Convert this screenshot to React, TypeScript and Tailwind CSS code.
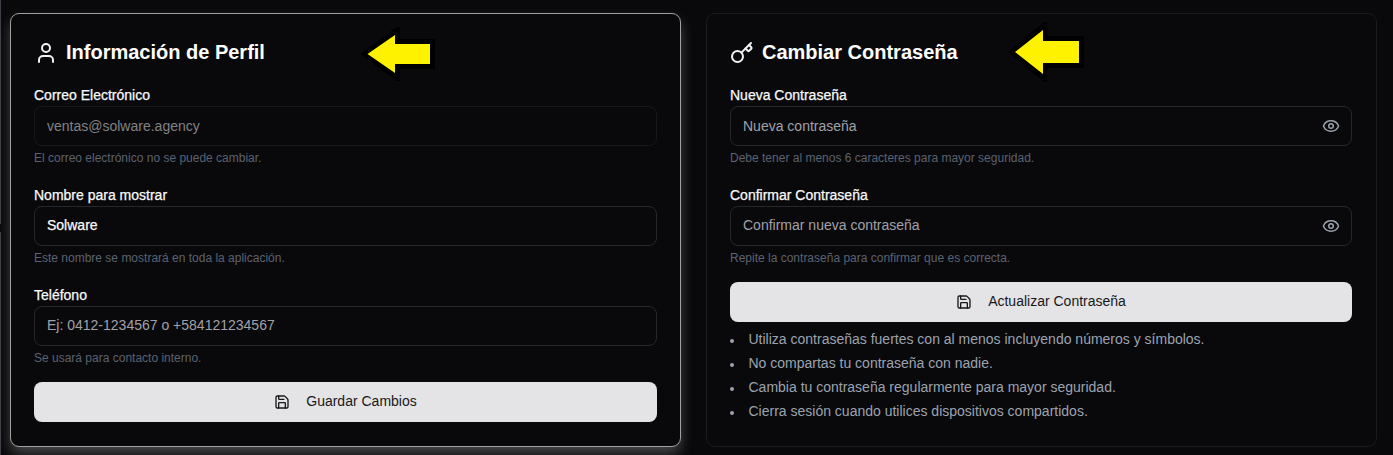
import type { ReactNode } from "react";
import { Eye, Key, Save, User } from "lucide-react";

function Field({ label, value, hint, tone, disabled, eye }: { label: string; value: string; hint: string; tone: string; disabled?: boolean; eye?: boolean }) {
  return (
    <div className="flex h-[100px] flex-col">
      <label className="h-[20px] text-[14px] leading-[20px] text-[#fafafa] [-webkit-text-stroke:0.25px_#fafafa]">{label}</label>
      <div className={`mt-px flex h-[40px] items-center justify-between rounded-[8px] border pr-[11px] pl-[12px] ${disabled ? "border-[#18181a]" : "border-[#27272a]"}`}>
        <span className={`text-[14px] leading-[20px] ${tone}`}>{value}</span>
        {eye && <Eye className="size-[18px] text-[#9ca3af]" strokeWidth={2} />}
      </div>
      <p className="mt-[4px] text-[12px] leading-[16px] text-[#5b6271]">{hint}</p>
    </div>
  );
}

function SaveButton({ children }: { children: ReactNode }) {
  return (
    <button className="flex h-[40px] w-full shrink-0 items-center justify-center gap-4 rounded-[8px] bg-[#e4e4e7] text-[14px] leading-[20px] text-[#18181b]">
      <Save className="size-4" strokeWidth={2} />
      <span className="pb-[2px]">{children}</span>
    </button>
  );
}

const tips = [
  "Utiliza contraseñas fuertes con al menos incluyendo números y símbolos.",
  "No compartas tu contraseña con nadie.",
  "Cambia tu contraseña regularmente para mayor seguridad.",
  "Cierra sesión cuando utilices dispositivos compartidos.",
];

export default function App() {
  return (
    <div className="relative flex h-[455px] w-[1393px] overflow-hidden bg-[#09090b] font-['Liberation_Sans',Arial,sans-serif]">
      <div className="flex w-px shrink-0 flex-col justify-between bg-[#09090b]">
        <div className="h-[224px] bg-[#3f4047]" />
        <div className="h-[223px] bg-[#3f4047]" />
      </div>
      <div className="flex gap-[25px] pt-[13px] pl-[9px]">
        <section className="h-[434px] w-[671px] rounded-[9px] border border-[#a0a0a0] bg-[#09090b] px-[23px] pt-[21px] shadow-[0_7px_14px_-1px_rgba(255,255,255,0.27)]">
          <h2 className="flex h-[34px] items-center gap-[8px] text-[20px] leading-[28px] font-bold text-white">
            <User className="mt-px size-[24px] text-[#f0f0f0]" strokeWidth={2} />
            Información de Perfil
          </h2>
          <div className="mt-[16px]">
            <Field label="Correo Electrónico" value="ventas@solware.agency" hint="El correo electrónico no se puede cambiar." tone="text-[#828284]" disabled />
            <Field label="Nombre para mostrar" value="Solware" hint="Este nombre se mostrará en toda la aplicación." tone="pb-[2px] text-[#fafafa] [-webkit-text-stroke:0.25px_#fafafa]" />
            <Field label="Teléfono" value="Ej: 0412-1234567 o +584121234567" hint="Se usará para contacto interno." tone="pb-[2px] text-[#a1a1aa]" />
          </div>
          <div className="-mt-[3px]"><SaveButton>Guardar Cambios</SaveButton></div>
        </section>
        <section className="h-[434px] w-[671px] rounded-[9px] border border-[#1b1b1d] bg-[#09090b] pr-[24px] pl-[23px] pt-[21px]">
          <h2 className="flex h-[34px] items-center gap-[8px] text-[20px] leading-[28px] font-bold text-white">
            <Key className="mt-px size-[24px] text-[#f0f0f0]" strokeWidth={2} />
            Cambiar Contraseña
          </h2>
          <div className="mt-[16px]">
            <Field label="Nueva Contraseña" value="Nueva contraseña" hint="Debe tener al menos 6 caracteres para mayor seguridad." tone="text-[#a1a1aa]" eye />
            <Field label="Confirmar Contraseña" value="Confirmar nueva contraseña" hint="Repite la contraseña para confirmar que es correcta." tone="pb-[2px] text-[#a1a1aa]" eye />
          </div>
          <div className="-mt-[3px]"><SaveButton>Actualizar Contraseña</SaveButton></div>
          <ul className="mt-[5px] text-[14px] leading-[24px] text-[#9ca3af]">
            {tips.map((t) => (
              <li key={t} className="flex items-center gap-[14.5px]">
                <span className="mt-[3px] size-[4px] rounded-full bg-[#9ca3af]" />
                {t}
              </li>
            ))}
          </ul>
        </section>
      </div>
      <svg className="absolute top-[26px] left-[360px]" width="76" height="56" viewBox="360 26 76 56">
        <path d="M360 54L397 27H400V39H435V69H400V81H397Z" fill="#000" />
        <path d="M367.5 54L395 35V44H430V64H395V73Z" fill="#fff200" />
      </svg>
      <svg className="absolute top-[21px] left-[1008px]" width="77" height="62" viewBox="1008 21 77 62">
        <path d="M1008 52L1044 22H1047V36H1084V68H1047V82H1044Z" fill="#000" />
        <path d="M1015 52L1043 30V41H1079V63H1043V74Z" fill="#fff200" />
      </svg>
    </div>
  );
}
